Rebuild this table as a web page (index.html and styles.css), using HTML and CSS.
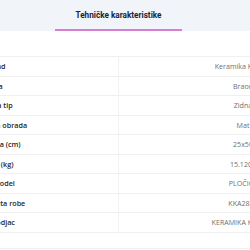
FILE: index.html
```html
<!DOCTYPE html>
<html lang="sr">
<head>
<meta charset="utf-8">
<title>Tehničke karakteristike</title>
<link rel="stylesheet" href="styles.css">
</head>
<body>
<div class="tabs">
  <div class="tab">Tehničke karakteristike</div>
</div>
<div class="spec">
  <div class="label">Brend</div><div class="value">Keramika Kanjiža</div>
  <div class="label">Boja</div><div class="value">Braon</div>
  <div class="label">Pločica tip</div><div class="value">Zidna</div>
  <div class="label">Površinska obrada</div><div class="value">Mat</div>
  <div class="label">Dimenzija (cm)</div><div class="value">25x50</div>
  <div class="label">Težina (kg)</div><div class="value">15.1200</div>
  <div class="label">Šifra model</div><div class="value">PLOČICE</div>
  <div class="label">Tip kvaliteta robe</div><div class="value">KKA2834</div>
  <div class="label">Proizvodjac</div><div class="value">KERAMIKA KANJIŽA</div>
</div>
<div class="spec-foot"></div>
</body>
</html>
```
FILE: styles.css
```css
html, body {
  margin: 0;
  padding: 0;
  background: #ffffff;
}
body {
  width: 250px;
  height: 250px;
  overflow: hidden;
  font-family: "Open Sans", "Liberation Sans", sans-serif;
}
.tabs {
  display: flex;
  height: 31px;
  padding-left: 55px;
  background: #f1f4f8;
}
.tab {
  box-sizing: border-box;
  width: 127px;
  height: 31px;
  display: flex;
  align-items: center;
  justify-content: center;
  border-bottom: 2px solid #d77fd0;
  font-family: Roboto, "Noto Sans", sans-serif;
  font-weight: 700;
  font-size: 8.2px;
  color: #18243a;
}
.spec {
  display: grid;
  grid-template-columns: 246px 249px;
  margin: 25px 0 0 -127.5px;
  width: 495px;
  border-top: 1px solid #f0f0f0;
}
.label, .value {
  box-sizing: border-box;
  height: 19.5px;
  display: flex;
  align-items: center;
  justify-content: center;
  white-space: nowrap;
  border-bottom: 1px solid #f0f0f0;
}
.label {
  border-right: 1px solid #f2f2f2;
  font-weight: 600;
  font-size: 7.2px;
  color: #262626;
}
.value {
  font-size: 7.1px;
  color: #6f6f6f;
}
.spec-foot {
  height: 15px;
  border-bottom: 1px solid #f0f0f0;
}
```
